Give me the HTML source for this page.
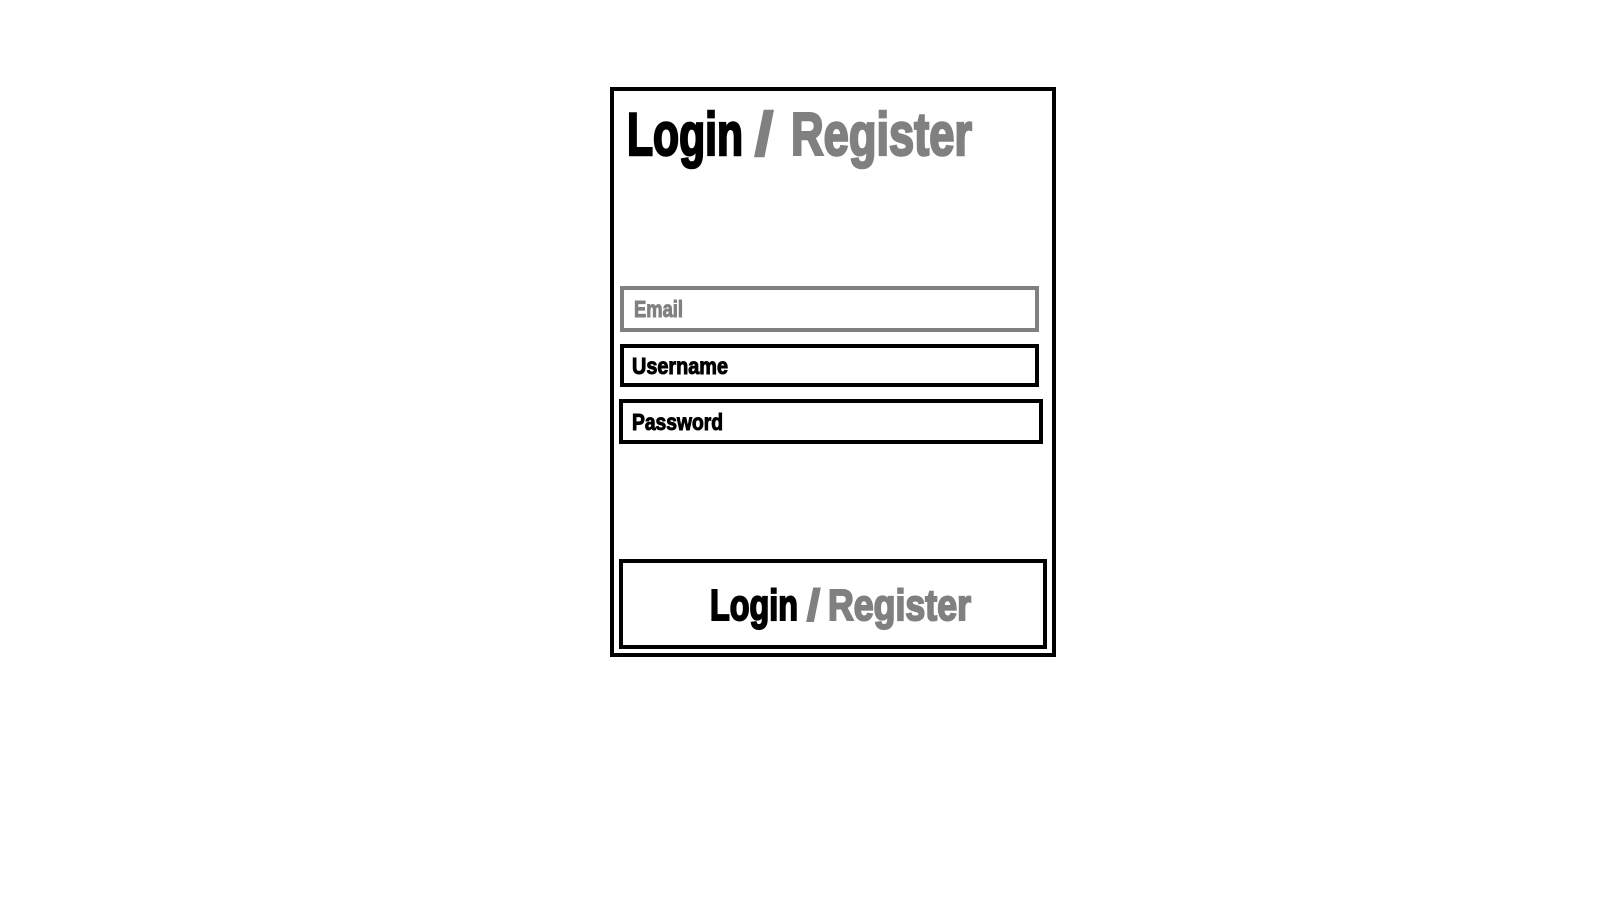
<!DOCTYPE html>
<html><head><meta charset="utf-8"><style>
html,body{margin:0;padding:0;background:#fff;width:1621px;height:910px;overflow:hidden}
svg{display:block}
text{font-family:"Liberation Sans",Arial,sans-serif;font-weight:bold}
</style></head><body>
<svg width="1621" height="910" viewBox="0 0 1621 910">
<rect x="612" y="89" width="442" height="566" fill="none" stroke="#000" stroke-width="4"/>
<text x="627" y="155" font-size="60" fill="#000" stroke="#000" stroke-width="2.5" textLength="116" lengthAdjust="spacingAndGlyphs">Login</text>
<text x="755" y="155" font-size="60" fill="#808080" stroke="#808080" stroke-width="2.5" textLength="18" lengthAdjust="spacingAndGlyphs">/</text>
<text x="791" y="155" font-size="60" fill="#808080" stroke="#808080" stroke-width="2.5" textLength="181" lengthAdjust="spacingAndGlyphs">Register</text>

<rect x="622" y="288" width="415" height="42" fill="none" stroke="#808080" stroke-width="4"/>
<text x="634" y="317" font-size="23" fill="#808080" stroke="#808080" stroke-width="1" textLength="49" lengthAdjust="spacingAndGlyphs">Email</text>

<rect x="622" y="346" width="415" height="39" fill="none" stroke="#000" stroke-width="4"/>
<text x="632" y="374" font-size="23" fill="#000" stroke="#000" stroke-width="1" textLength="96" lengthAdjust="spacingAndGlyphs">Username</text>

<rect x="621" y="401" width="420" height="41" fill="none" stroke="#000" stroke-width="4"/>
<text x="632" y="430" font-size="23" fill="#000" stroke="#000" stroke-width="1" textLength="91" lengthAdjust="spacingAndGlyphs">Password</text>

<rect x="621" y="561" width="424" height="86" fill="none" stroke="#000" stroke-width="4"/>
<text x="710" y="620" font-size="44" fill="#000" stroke="#000" stroke-width="2" textLength="88" lengthAdjust="spacingAndGlyphs">Login</text>
<text x="807" y="620" font-size="44" fill="#808080" stroke="#808080" stroke-width="2" textLength="13" lengthAdjust="spacingAndGlyphs">/</text>
<text x="828" y="620" font-size="44" fill="#808080" stroke="#808080" stroke-width="2" textLength="143" lengthAdjust="spacingAndGlyphs">Register</text>
</svg>
</body></html>
